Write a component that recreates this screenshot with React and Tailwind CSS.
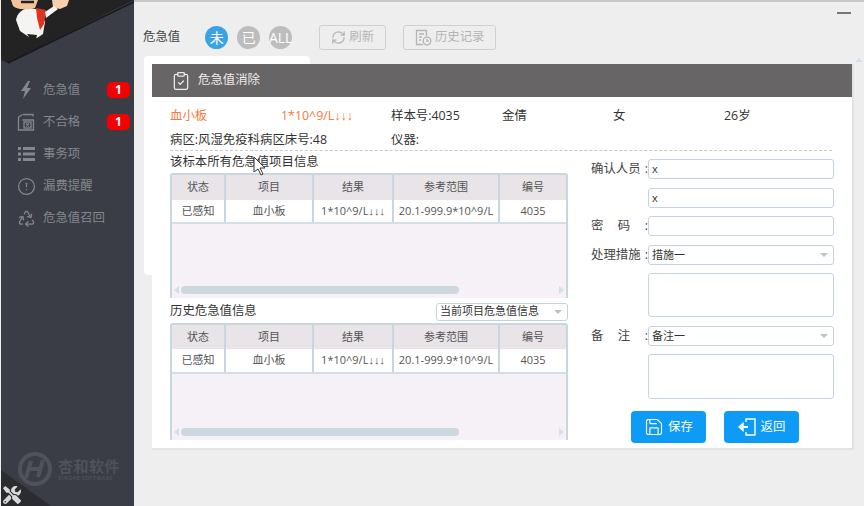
import React from "react";
import { CircleAlert, Recycle, RefreshCw, ClipboardCheck, Save } from "lucide-react";
import { FaTools } from "react-icons/fa";

const FONT = { fontFamily: '"Open Sans", "Noto Sans CJK SC", sans-serif' };
const ARROW_FONT = { fontFamily: '"Liberation Sans", sans-serif' };

function BoltIcon() {
  return (
    <svg width="14" height="18" viewBox="0 0 14 18" fill="#85878c">
      <path d="M9 0L2 10h4l-2 8 8-11H8l3-7z" />
    </svg>
  );
}

function ListIcon() {
  return (
    <svg width="17" height="14" viewBox="0 0 17 14" fill="#85878c">
      <path d="M0 0h3v3H0zM5 0h12v3H5zM0 5.5h3v3H0zM5 5.5h12v3H5zM0 11h3v3H0zM5 11h12v3H5z" />
    </svg>
  );
}

function FileXIcon() {
  return (
    <svg width="18" height="18" viewBox="0 0 18 18" fill="none" stroke="#85878c" strokeWidth="1.3">
      <path d="M6 1.5h10v2M1.5 4v13h15V7H5.5M1.5 4l4-2.5" />
      <rect x="7" y="9" width="7" height="6" />
      <path d="M9 10.5l3 3M12 10.5l-3 3" />
    </svg>
  );
}

function HistoryIcon() {
  return (
    <svg width="17" height="17" viewBox="0 0 17 17" fill="none" stroke="#b4b4b4" strokeWidth="1.3">
      <path d="M8 15.5H1.5v-14h10V7" />
      <path d="M4 5h5M4 8h3M4 11h2" />
      <circle cx="12" cy="12" r="3.8" />
      <path d="M12 10v2.2h2" />
    </svg>
  );
}

function BackIcon() {
  return (
    <svg width="19" height="18" viewBox="0 0 19 18" fill="none" stroke="white" strokeWidth="1.4">
      <path d="M8 4V1h9v16H8v-3" />
      <path d="M10 9H3" strokeWidth="2" />
      <path d="M5 5.5L1 9l4 3.5z" fill="white" />
    </svg>
  );
}

function Logo() {
  return (
    <svg width="133" height="64" viewBox="0 0 133 64" className="block">
      <path d="M0 0h133L7 63 0 60z" fill="#232323" />
      <path d="M133 2L7 63" stroke="#17181b" strokeWidth="1.5" />
      <path d="M15 20c1-7 7-12 14-12l10 2 5 12-2 12-6 4-8-1-9-6z" fill="#f4f4f2" />
      <path d="M35 8l10 2-2 14-4 6-3-12z" fill="#e0331f" />
      <path d="M26 34l4 6 5-1 1-4z" fill="#222" />
      <path d="M10 0l2 6c4 4 16 4 22 2l3-8z" fill="#f2c49b" />
      <path d="M20 2h13" stroke="#222" strokeWidth="2.5" />
      <path d="M51 0h17l-2 6-7 3-7-2z" fill="#f6d0ae" />
      <path d="M44 12l9-6 4 3-12 9z" fill="#f4f4f2" />
    </svg>
  );
}

function Nav({ icon, label, badge }) {
  return (
    <div className="flex h-8 items-center">
      <div className="flex w-[42px] justify-center pl-[8px]">{icon}</div>
      <span className="text-[12.4px] text-[#85878c]">{label}</span>
      {badge && (
        <span className="ml-auto mr-[4px] flex h-[16px] w-[23px] items-center justify-center rounded-[5px] bg-[#f50000] text-[12px] font-bold text-white">
          {badge}
        </span>
      )}
    </div>
  );
}

function Round({ label, active }) {
  return (
    <span
      className={`flex h-[23px] w-[23px] items-center justify-center rounded-full text-[14px] text-white ${
        active ? "bg-[#3ba3e4]" : "bg-[#bdbdbd]"
      }`}
    >
      {label}
    </span>
  );
}

function Result() {
  return (
    <>
      1*10^9/L<span style={ARROW_FONT}>↓↓↓</span>
    </>
  );
}

function Cell({ w, children, h, bg, last }) {
  return (
    <div
      className={`flex items-center justify-center text-[11px] text-[#555] ${w} ${h} ${bg} ${
        last ? "" : "border-r-2 border-[#c9d6e0]"
      }`}
    >
      {children}
    </div>
  );
}

function DataTable({ height, headH, rowH }) {
  const w = ["w-[54px]", "w-[88px]", "w-[80px]", "w-[106px]", "flex-1"];
  const head = ["状态", "项目", "结果", "参考范围", "编号"];
  const row = ["已感知", "血小板", <Result key="r" />, "20.1-999.9*10^9/L", "4035"];
  return (
    <div className={`flex flex-col overflow-hidden rounded-t-[3px] border-x-2 border-t-2 border-[#c9d6e0] bg-[#f5f1f6] ${height}`}>
      <div className="flex">
        {head.map((t, i) => (
          <Cell key={t} w={w[i]} h={headH} bg="bg-[#e8e4e8]" last={i === 4}>{t}</Cell>
        ))}
      </div>
      <div className="flex border-b-2 border-[#d3dfe6]">
        {row.map((t, i) => (
          <Cell key={i} w={w[i]} h={rowH} bg="bg-white" last={i === 4}>{t}</Cell>
        ))}
      </div>
      <div className="mt-auto mb-[4px] flex items-center px-[2px]">
        <span className="h-0 w-0 border-y-[4px] border-r-[5px] border-y-transparent border-r-[#d3dfe6]" />
        <span className="ml-[2px] h-[8px] w-[278px] rounded-full bg-[#cbd9df]" />
        <span className="ml-auto h-0 w-0 border-y-[4px] border-l-[5px] border-y-transparent border-l-[#d3dfe6]" />
      </div>
    </div>
  );
}

function Field({ label, value, select, h = "h-[20px]", mb = "mb-[9px]" }) {
  return (
    <div className={`flex ${mb}`}>
      <div className="flex h-[20px] w-[57px] shrink-0 items-center justify-between text-[12.4px] text-[#444]">
        {label}
      </div>
      <div className={`flex flex-1 items-center rounded-[3px] border border-[#c5d3e0] bg-white pl-[3px] pr-[5px] text-[11px] text-[#333] ${h}`}>
        {value}
        {select && (
          <span className="ml-auto h-0 w-0 border-x-[4px] border-t-[4px] border-x-transparent border-t-[#b9c4cc]" />
        )}
      </div>
    </div>
  );
}

export default function App() {
  return (
    <div style={FONT} className="relative flex h-[506px] w-[864px] overflow-hidden bg-[#eeeeee]">
      <aside className="relative ml-[1px] flex w-[133px] shrink-0 flex-col bg-[#3a3d46]">
        <Logo />
        <div className="mt-[10px]">
          <Nav icon={<BoltIcon />} label="危急值" badge="1" />
          <Nav icon={<FileXIcon />} label="不合格" badge="1" />
          <Nav icon={<ListIcon />} label="事务项" />
          <Nav icon={<CircleAlert size={19} stroke="#85878c" strokeWidth={1.6} />} label="漏费提醒" />
          <Nav icon={<Recycle size={19} stroke="#85878c" strokeWidth={1.6} />} label="危急值召回" />
        </div>

        <div className="mt-auto mb-[19px] ml-[15px] flex items-center gap-[5px] text-[#4f5259]">
          <svg width="37" height="36" viewBox="0 0 37 36" fill="none" stroke="#4f5259">
            <circle cx="19" cy="18" r="15" strokeWidth="4" />
            <path d="M15 10l-5 17M27 9l-5 17M11 18h15" strokeWidth="4" />
          </svg>
          <div className="flex flex-col">
            <span className="text-[15px] font-bold leading-[16px] tracking-[0.5px]" style={{ fontFamily: '"Noto Sans CJK SC", sans-serif' }}>杏和软件</span>
            <span className="mt-[1px] text-[5px] font-bold leading-[6px] tracking-[0.5px]">XINGHE SOFTWARE</span>
          </div>
        </div>
        <div className="absolute bottom-0 left-0 h-[36px] w-[50px] bg-[#2b2c30] [clip-path:polygon(0_0,100%_100%,0_100%)]" />
        <FaTools className="absolute bottom-[2px] left-[2px] text-[#d8d8d8]" size={18} />
      </aside>

      <main className="relative flex-1">
        <div className="h-[2px] bg-[#c8c8c8]" />
        <div className="flex items-center pl-[9px] pt-[23px]">
          <span className="mr-[25px] text-[12.4px] text-[#444]">危急值</span>
          <div className="flex gap-[9px]">
            <Round label="未" active />
            <Round label="已" />
            <Round label="ALL" />
          </div>
          <button className="ml-[27px] flex h-[25px] w-[67px] items-center justify-center gap-[3px] rounded-[3px] border border-[#d0d0d0] text-[12.4px] text-[#b4b4b4]">
            <RefreshCw size={15} stroke="#b4b4b4" />
            刷新
          </button>
          <button className="ml-[17px] flex h-[25px] w-[93px] items-center justify-center gap-[3px] rounded-[3px] border border-[#d0d0d0] text-[12.4px] text-[#b4b4b4]">
            <HistoryIcon />
            历史记录
          </button>
        </div>
        <div className="ml-[10px] mt-[6px] h-[219px] w-[166px] rounded-[4px] bg-white" />

        <span className="absolute right-[13px] top-[12px] h-[2px] w-[14px] bg-[#777]" />
        <span className="absolute right-[1px] top-[58px] h-0 w-0 border-x-[4px] border-b-[4px] border-x-transparent border-b-[#cfdfee]" />

        {/* 危急值消除 dialog */}
        <div className="absolute left-[18px] top-[64px] h-[386px] w-[702px] border-b-2 border-r-2 border-[#e3e3e3] bg-white">
          <div className="flex h-[33px] items-center bg-[#686567] pl-[19px] text-[12.4px] text-[#ececec]">
            <ClipboardCheck size={20} stroke="#ececec" strokeWidth={1.5} />
            <span className="ml-[7px]">危急值消除</span>
          </div>
          <div className="px-[18px]">
            <div className="flex h-[36px] items-center pt-[2px] text-[12.4px] text-[#333]">
              <span className="w-[111px] text-[#f47a3c]">血小板</span>
              <span className="w-[110px] text-[#f47a3c]"><Result /></span>
              <span className="w-[111px]">样本号:4035</span>
              <span className="w-[111px]">金倩</span>
              <span className="w-[111px]">女</span>
              <span>26岁</span>
            </div>
            <div className="flex h-[15px] items-center text-[12.4px] text-[#333]">
              <span className="w-[221px]">病区:风湿免疫科病区床号:48</span>
              <span>仪器:</span>
            </div>
            <div className="mt-[2px] w-[662px] border-b border-dashed border-[#c8c8c8]" />
            <div className="mt-[2px] flex">
              <div className="w-[398px] shrink-0">
                <div className="h-[20px] text-[12.4px] leading-[18px] text-[#333]">该标本所有危急值项目信息</div>
                <DataTable height="h-[125px]" headH="h-[25px]" rowH="h-[22px]" />
                <div className="mt-[4px] flex h-[19px] items-center justify-between text-[12.4px] text-[#333]">
                  <span>历史危急值信息</span>
                  <div className="flex h-[18px] w-[132px] items-center rounded-[3px] border border-[#c5d3e0] pl-[3px] pr-[5px] text-[11px]">
                    当前项目危急值信息
                    <span className="ml-auto h-0 w-0 border-x-[4px] border-t-[4px] border-x-transparent border-t-[#b9c4cc]" />
                  </div>
                </div>
                <div className="mt-[2px]">
                  <DataTable height="h-[117px]" headH="h-[24px]" rowH="h-[23px]" />
                </div>
              </div>
              <div className="ml-[23px] w-[244px] pt-[6px]">
                <Field label={<><span>确认人员</span><span>:</span></>} value="x" />
                <Field label="" value="x" mb="mb-[8px]" />
                <Field label={<><span>密</span><span>码</span><span>:</span></>} />
                <Field label={<><span>处理措施</span><span>:</span></>} value="措施一" select mb="mb-[8px]" />
                <Field label="" h="h-[44px]" />
                <Field label={<><span>备</span><span>注</span><span>:</span></>} value="备注一" select mb="mb-[8px]" />
                <Field label="" h="h-[45px]" mb="mb-[12px]" />
                <div className="ml-[40px] flex gap-[18px]">
                  <button className="flex h-[32px] w-[75px] items-center justify-center gap-[4px] rounded-[4px] bg-[#0d9bf5] text-[12.4px] text-white">
                    <Save size={20} strokeWidth={1.4} />
                    保存
                  </button>
                  <button className="flex h-[32px] w-[75px] items-center justify-center gap-[4px] rounded-[4px] bg-[#0d9bf5] text-[12.4px] text-white">
                    <BackIcon />
                    返回
                  </button>
                </div>
              </div>
            </div>
          </div>
        </div>

        {/* mouse pointer */}
        <svg className="absolute left-[119px] top-[156px]" width="14" height="20" viewBox="0 0 14 20">
          <path d="M1 1v15l4-3 3 6 2-1-3-6h5z" fill="white" stroke="#333" strokeWidth="1" />
        </svg>
      </main>
    </div>
  );
}
